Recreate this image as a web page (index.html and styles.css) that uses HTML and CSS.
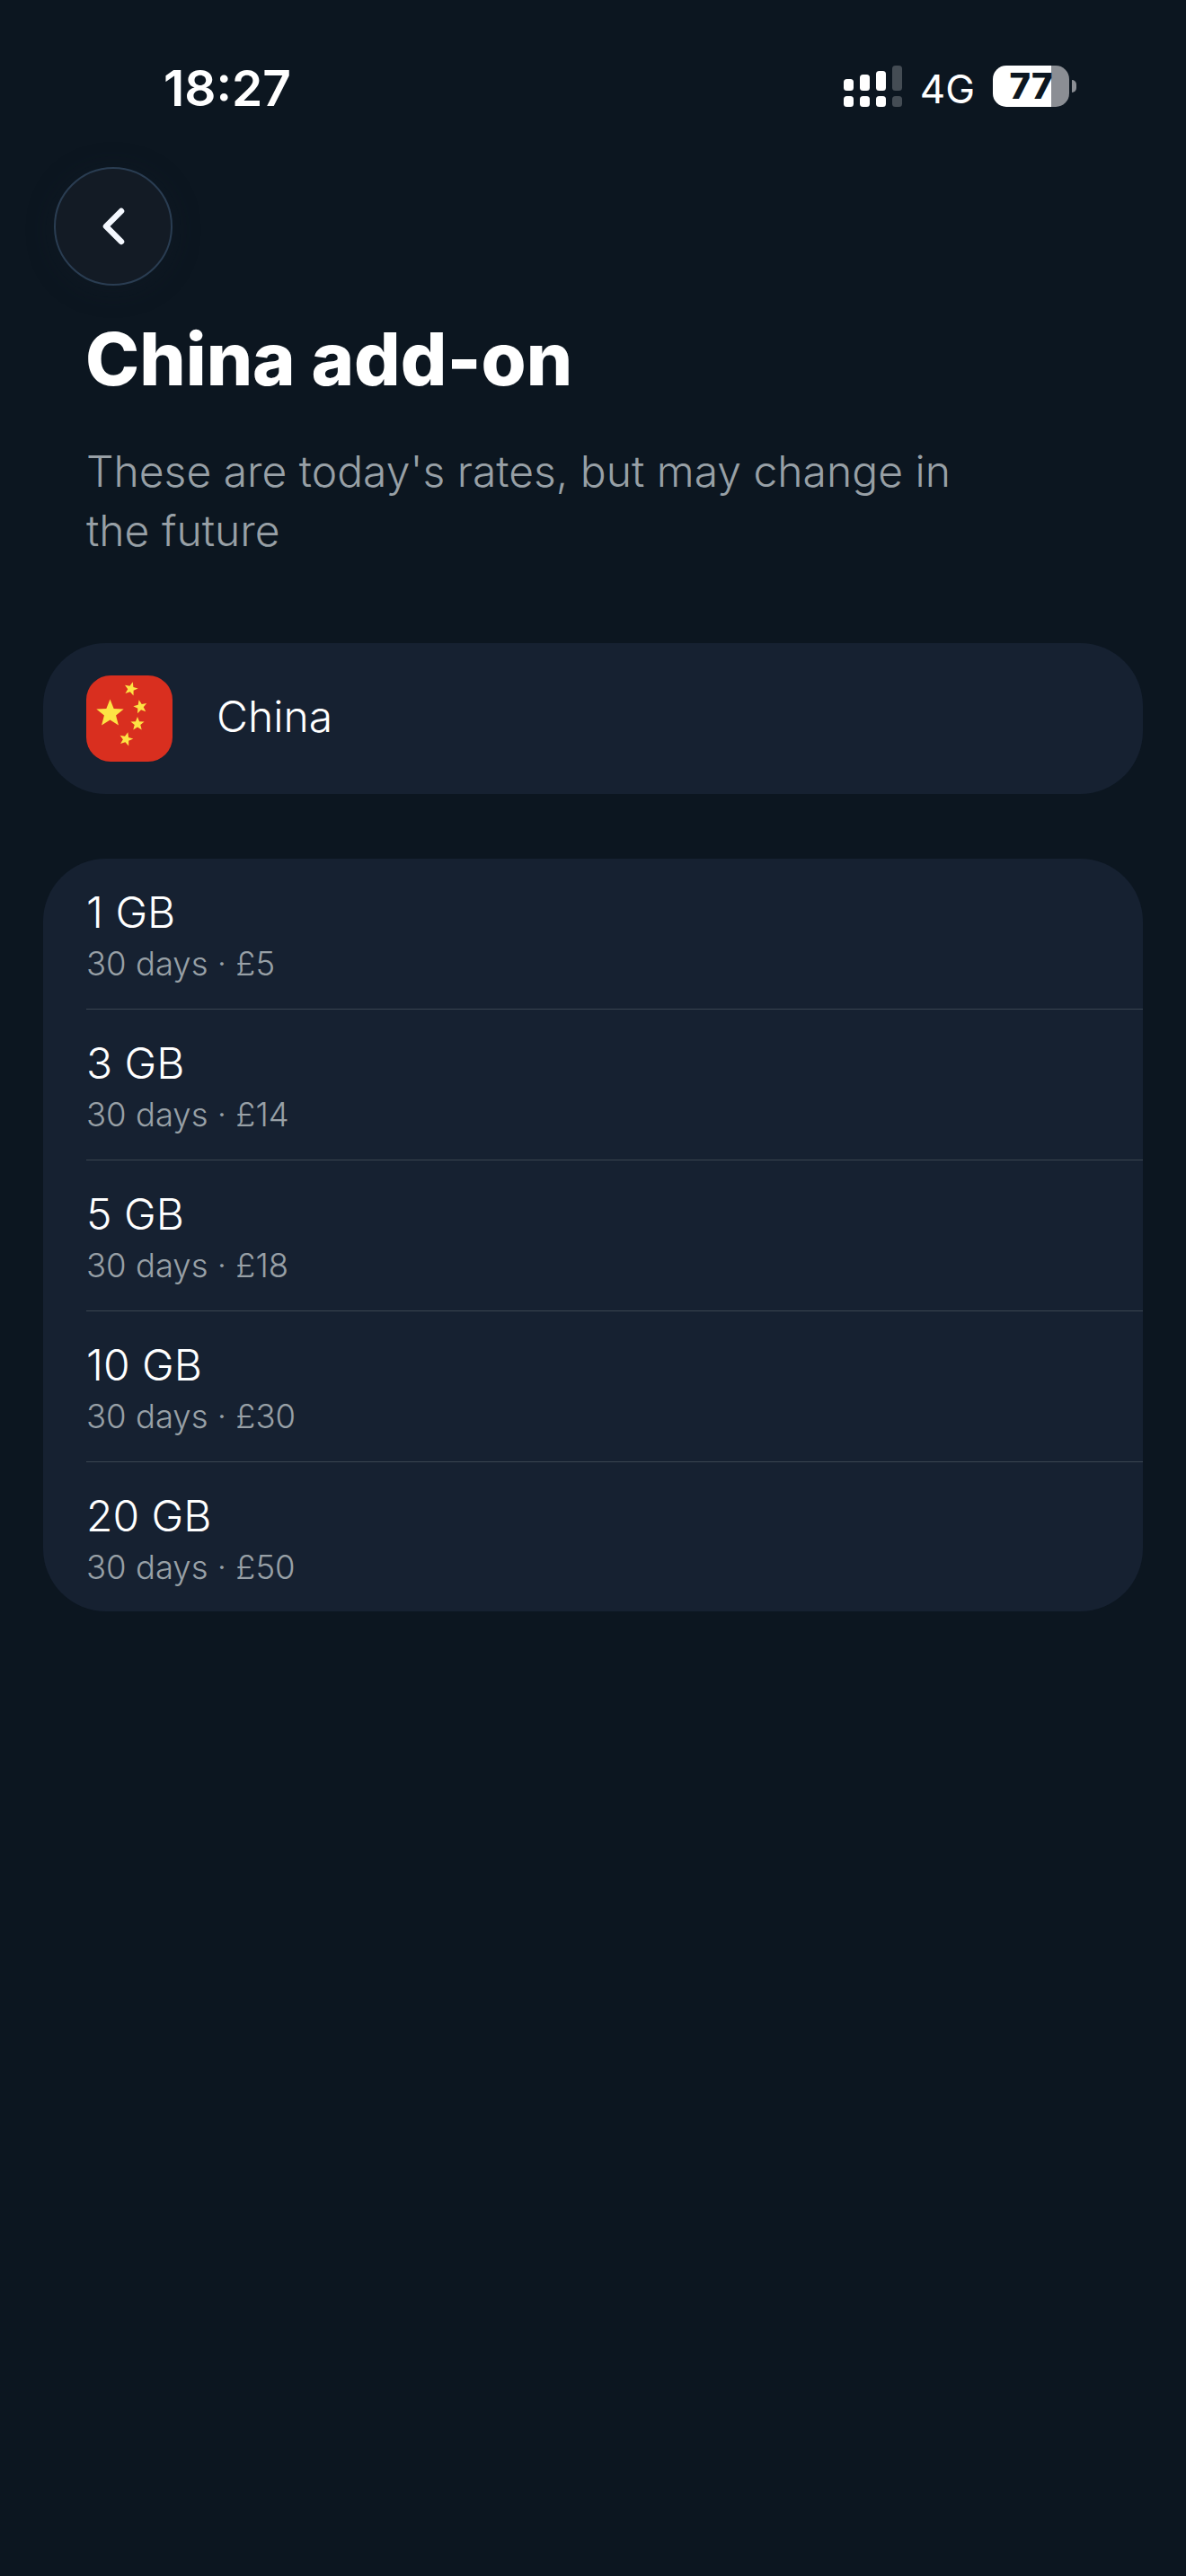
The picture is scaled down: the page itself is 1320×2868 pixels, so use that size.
FILE: index.html
```html
<!DOCTYPE html>
<html lang="en">
<head>
    <meta charset="UTF-8">
    <meta name="viewport" content="width=device-width, initial-scale=1.0">
    <title>China add-on</title>
    <link rel="stylesheet" href="styles.css">
</head>
<body>
    <header class="status-bar">
        <span class="time">18:27</span>
        <div class="status-icons">
            <svg class="signal" width="65" height="46" viewBox="0 0 65 46">
                <rect x="0" y="15" width="11" height="13" rx="3.5" fill="#fff"/>
                <rect x="0" y="34" width="11" height="12" rx="3.5" fill="#fff"/>
                <rect x="18" y="10" width="11" height="18" rx="3.5" fill="#fff"/>
                <rect x="18" y="34" width="11" height="12" rx="3.5" fill="#fff"/>
                <rect x="36" y="6" width="11" height="22" rx="3.5" fill="#fff"/>
                <rect x="36" y="34" width="11" height="12" rx="3.5" fill="#fff"/>
                <rect x="54" y="0" width="11" height="28" rx="3.5" fill="#444c54"/>
                <rect x="54" y="34" width="11" height="12" rx="3.5" fill="#444c54"/>
            </svg>
            <span class="network">4G</span>
            <div class="battery">
                <div class="battery-body">
                    <span class="battery-level">77</span>
                </div>
                <span class="battery-tip"></span>
            </div>
        </div>
    </header>
    <main>
        <button class="back-button" type="button">
            <svg width="30" height="46" viewBox="0 0 30 46">
                <path d="M24 6 L7 23 L24 40" fill="none" stroke="#f4f8ff" stroke-width="6.5" stroke-linecap="round" stroke-linejoin="round"/>
            </svg>
        </button>
        <h1>China add-on</h1>
        <p class="subtitle">These are today's rates, but may change in the future</p>
        <section class="card country">
            <svg class="flag" width="96" height="96" viewBox="0 0 96 96">
                <defs>
                    <polygon id="star" points="0,-10 2.6,-3.4 9.5,-3.1 4.1,1.3 5.9,8.1 0,4.3 -5.9,8.1 -4.1,1.3 -9.5,-3.1 -2.6,-3.4"/>
                </defs>
                <rect width="96" height="96" rx="27" fill="#d92f1f"/>
                <g fill="#fde344">
                    <use href="#star" transform="translate(26.5 42.5) scale(1.6)"/>
                    <use href="#star" transform="translate(49.7 15) rotate(15) scale(.8)"/>
                    <use href="#star" transform="translate(60.3 35) rotate(-12) scale(.8)"/>
                    <use href="#star" transform="translate(57 54) scale(.8)"/>
                    <use href="#star" transform="translate(44.3 71) rotate(15) scale(.8)"/>
                </g>
            </svg>
            <span class="country-name">China</span>
        </section>
        <ul class="card plans">
            <li><span class="plan-size">1 GB</span><span class="plan-info">30 days · £5</span></li>
            <li><span class="plan-size">3 GB</span><span class="plan-info">30 days · £14</span></li>
            <li><span class="plan-size">5 GB</span><span class="plan-info">30 days · £18</span></li>
            <li><span class="plan-size">10 GB</span><span class="plan-info">30 days · £30</span></li>
            <li><span class="plan-size">20 GB</span><span class="plan-info">30 days · £50</span></li>
        </ul>
    </main>
</body>
</html>
```

FILE: styles.css
```css
body {
    margin: 0;
    padding: 0;
    min-height: 2868px;
    background-color: #0c1620;
    color: #fff;
    font-family: Inter, "Noto Sans", sans-serif;
}

.status-bar {
    height: 186px;
    box-sizing: border-box;
    padding: 68px 122px 0 182px;
    display: flex;
    justify-content: space-between;
    align-items: flex-start;
}

.time {
    font-size: 55px;
    font-weight: 600;
    line-height: 60px;
}

.status-icons {
    display: flex;
    align-items: center;
    gap: 20px;
    height: 46px;
    margin-top: 5px;
}

.network {
    margin-top: 6px;
    font-size: 44px;
    font-weight: 400;
}

.battery {
    display: flex;
    align-items: center;
    gap: 3px;
}

.battery-body {
    width: 85px;
    height: 46px;
    border-radius: 15px;
    background: linear-gradient(to right, #fff 76.5%, #8b8e94 76.5%);
    color: #0c1620;
    font-size: 40px;
    font-weight: 800;
    line-height: 46px;
    text-align: center;
}

.battery-tip {
    width: 5px;
    height: 14px;
    border-radius: 0 5px 5px 0;
    background-color: #8b8e94;
}

main {
    padding: 0 48px;
}

.back-button {
    display: flex;
    align-items: center;
    justify-content: center;
    width: 132px;
    height: 132px;
    margin-left: 12px;
    padding: 0;
    background-color: #131b25;
    border: 2px solid #2a3d52;
    border-radius: 50%;
    box-sizing: border-box;
    box-shadow: 0 4px 30px rgba(20, 30, 40, 0.4);
}

h1 {
    margin: 34px 0 0 47px;
    font-size: 81px;
    font-weight: 800;
    line-height: 96px;
}

.subtitle {
    margin: 44px 0 0 48px;
    width: 1000px;
    font-size: 48px;
    font-weight: 300;
    line-height: 66px;
    color: #98a0a6;
}

.card {
    background-color: #162131;
    border-radius: 70px;
}

.country {
    display: flex;
    align-items: center;
    gap: 49px;
    height: 168px;
    margin-top: 92px;
    padding-left: 48px;
}

.country-name {
    margin-bottom: 6px;
    font-size: 48px;
    font-weight: 300;
}

.plans {
    list-style-type: none;
    margin: 72px 0 0;
    padding: 0 0 0 48px;
}

.plans li {
    display: flex;
    flex-direction: column;
    height: 168px;
    box-sizing: border-box;
    padding-top: 32px;
    border-bottom: 1px solid #3a4550;
}

.plans li:last-child {
    height: 166px;
    border-bottom: none;
}

.plan-size {
    font-size: 48px;
    font-weight: 300;
    line-height: 56px;
}

.plan-info {
    margin-top: 6px;
    font-size: 36.5px;
    font-weight: 300;
    line-height: 46px;
    color: #98a0a6;
}
```
